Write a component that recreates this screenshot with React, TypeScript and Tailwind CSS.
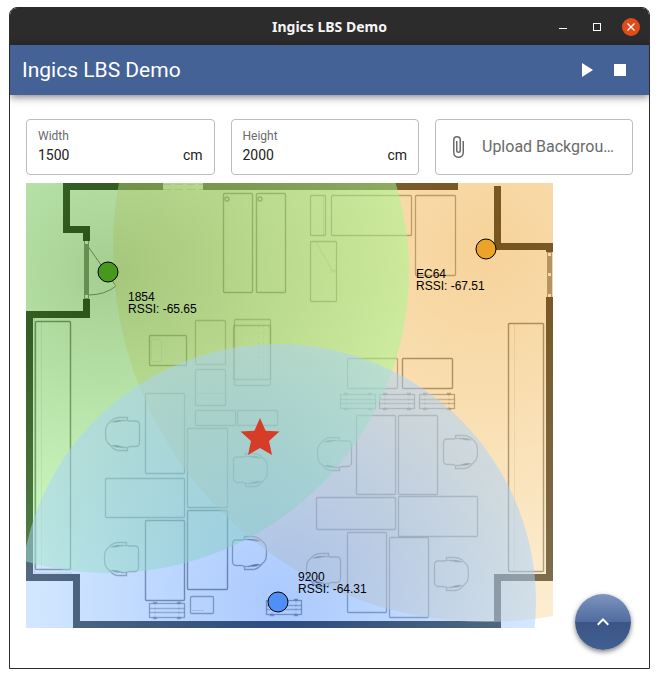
import React, { useState } from "react";

type Box = [x: number, y: number, width: number, height: number];

const walls: Box[] = [
  [63, 183, 100, 7],
  [203, 183, 255, 7],
  [63, 183, 7, 50],
  [63, 226, 27, 7],
  [83, 226, 7, 15],
  [83, 299, 7, 19],
  [26, 311, 64, 7],
  [26, 311, 7, 270],
  [26, 574, 54, 7],
  [73, 574, 7, 54],
  [73, 621, 428, 7],
  [494, 574, 7, 54],
  [494, 574, 59, 7],
  [546, 297, 7, 284],
  [494, 186, 7, 64],
  [494, 243, 59, 7],
  [546, 243, 7, 9],
];

const strongBoxes: Box[] = [
  [35, 321, 35, 248],
  [508, 323, 35, 248],
  [223, 193, 29, 99],
  [256, 193, 29, 99],
  [149, 335, 37, 30],
  [402, 358, 50, 30],
  [145, 520, 39, 80],
  [187, 510, 40, 79],
];

const furniture: Box[] = [
  [310, 195, 15, 40],
  [331, 195, 80, 40],
  [415, 195, 40, 80],
  [310, 241, 26, 60],
  [195, 320, 30, 44],
  [233, 325, 37, 54],
  [234, 319, 36, 66],
  [195, 369, 30, 36],
  [195, 410, 40, 15],
  [237, 410, 40, 15],
  [145, 393, 39, 80],
  [187, 428, 40, 79],
  [105, 478, 79, 39],
  [347, 358, 50, 30],
  [356, 415, 39, 79],
  [398, 415, 39, 79],
  [316, 497, 79, 32],
  [398, 496, 79, 40],
  [347, 532, 39, 80],
  [389, 537, 39, 80],
  [190, 596, 23, 17],
];

const radiators: [number, number][] = [
  [340, 394],
  [379, 394],
  [419, 394],
  [149, 603],
  [266, 600],
];

const chairs: { x: number; y: number; mirrored?: boolean }[] = [
  { x: 105, y: 416 },
  { x: 104, y: 541 },
  { x: 317, y: 436 },
  { x: 306, y: 552 },
  { x: 268, y: 452, mirrored: true },
  { x: 267, y: 535, mirrored: true },
  { x: 478, y: 434, mirrored: true },
  { x: 469, y: 556, mirrored: true },
];

const beacons = [
  { id: "EC64", rssi: "-67.51", x: 486, y: 249, r: 373, dot: "#eba328", inner: "#eea735", outer: "#fadda6", tx: 416, ty: 278 },
  { id: "1854", rssi: "-65.65", x: 108, y: 272, r: 301, dot: "#46991c", inner: "#4c9f24", outer: "#a2fa90", tx: 128, ty: 301 },
  { id: "9200", rssi: "-64.31", x: 278, y: 602, r: 258, dot: "#508ff8", inner: "#5693fc", outer: "#a8d2ff", tx: 298, ty: 581 },
];

function Chair({ x, y, mirrored }: { x: number; y: number; mirrored?: boolean }) {
  return (
    <g transform={`translate(${x} ${y}) scale(${mirrored ? -1 : 1} 1)`}>
      <path d="M22.500 1.500H14C9 1.500 7 4 4.500 6.500C1.500 9 .5 11 .5 17.500S1.500 26 4.500 28.500C7 31 9 34.500 14 34.500H22.500V31.500L25 30.500H31Q34.500 30.500 34.500 26V9Q34.500 5 31 5H25L22.500 4.500Z" />
      <path d="M8 5.800Q12 3.600 17 4.600Q12 6.200 8 5.800ZM8 29.700Q12 31.800 17 31Q12 29 8 29.700Z" fill="#000" fillOpacity=".5" />
      <path d="M17 4.500H22M17 31.500H22" strokeOpacity=".4" />
    </g>
  );
}

function Radiator({ x, y }: { x: number; y: number }) {
  return (
    <g transform={`translate(${x + 0.5} ${y + 0.5})`}>
      <rect width="35" height="14" />
      <path d="M0 5H35M0 9H35" strokeOpacity=".35" />
      <path d="M4 0V-1H7V0M28 0V-1H31V0M4 14V15H7V14M28 14V15H31V14" />
      <path d="M5.500 0V14M29.500 0V14" strokeOpacity=".25" strokeDasharray="2 2" />
    </g>
  );
}

function Outline({ box: [x, y, width, height] }: { box: Box }) {
  return <rect x={x + 0.5} y={y + 0.5} width={width} height={height} rx="1" />;
}

function FloorPlan() {
  return (
    <svg
      viewBox="26 183 527 445"
      role="img"
      aria-label="Floor plan with beacon ranges"
      className="block w-[527px] max-w-full"
    >
      <defs>
        {beacons.map((b) => (
          <radialGradient key={b.id} id={`range-${b.id}`}>
            <stop offset="0" stopColor={b.inner} />
            <stop offset="1" stopColor={b.outer} />
          </radialGradient>
        ))}
      </defs>

      <g fill="#000">
        {walls.map(([x, y, w, h], i) => (
          <rect key={i} x={x} y={y} width={w} height={h} />
        ))}
      </g>

      <g fill="none" stroke="#000" strokeWidth="1.400" strokeOpacity=".6">
        {strongBoxes.map((box, i) => (
          <Outline key={i} box={box} />
        ))}
        <circle cx="227" cy="199" r="2" />
        <circle cx="260" cy="199" r="2" />
        <path d="M87 245L116 286Q105 295 88 295" strokeWidth="1" />
      </g>

      <g fill="none" stroke="#000" strokeWidth="1.300" strokeOpacity=".47">
        {furniture.map((box, i) => (
          <Outline key={i} box={box} />
        ))}
        {radiators.map(([x, y]) => (
          <Radiator key={`${x}-${y}`} x={x} y={y} />
        ))}
        {chairs.map((c) => (
          <Chair key={`${c.x}-${c.y}`} {...c} />
        ))}
      </g>

      <g fill="none" stroke="#000" strokeOpacity=".2">
        <path d="M34.500 318V573H72M323.500 196V235M316 242L332 270" />
        <path d="M514.500 324V571M41.500 322V569" strokeOpacity=".1" />
        <rect x="331" y="270" width="4" height="2" />
        <rect x="151.500" y="339.500" width="10" height="22" rx="2" strokeOpacity=".12" />
        <path d="M258.500 326V380M263.500 326V380M268.500 326V380" strokeDasharray="3 2" strokeOpacity=".1" />
        <path d="M197 393.500H223M192 610.500H204" />
        <path d="M163 184.500H203M163 189.500H203" strokeDasharray="8 4" />
      </g>

      <rect x="84" y="241" width="5" height="58" fill="#777" />
      <rect x="85" y="241" width="3" height="3" fill="#fff" />
      <rect x="85" y="295" width="3" height="3" fill="#fff" />
      <rect x="547" y="252" width="5" height="45" fill="#777" />
      <rect x="548" y="253" width="3" height="3" fill="#fff" />
      <rect x="548" y="273" width="3" height="3" fill="#fff" />
      <rect x="548" y="294" width="3" height="3" fill="#fff" />

      {beacons.map((b) => (
        <circle key={b.id} cx={b.x} cy={b.y} r={b.r} fill={`url(#range-${b.id})`} fillOpacity=".5" />
      ))}

      {beacons.map((b) => (
        <g key={b.id}>
          <circle cx={b.x} cy={b.y} r="10" fill={b.dot} stroke="#000" />
          <text x={b.tx} y={b.ty} className="font-['Liberation_Sans',sans-serif] text-[12px]">
            {b.id}
          </text>
          <text x={b.tx} y={b.ty + 12} className="font-['Liberation_Sans',sans-serif] text-[12px]">
            {`RSSI: ${b.rssi}`}
          </text>
        </g>
      ))}

      <path
        d="M260 418L265.600 430.800L279.500 431.500L269 441L272 455L260 448L248 455L251 441L240.500 431.500L254.400 430.800Z"
        fill="#d63c26"
      />
    </svg>
  );
}

function SizeField({ id, label, initial }: { id: string; label: string; initial: string }) {
  const [value, setValue] = useState(initial);
  return (
    <div className="flex h-14 flex-col rounded border border-[#bdbdbd] px-[11px] pt-2">
      <label htmlFor={id} className="text-[12px] leading-4 text-[#6b6b6b]">
        {label}
      </label>
      <div className="flex items-center text-[14px] leading-[22px] text-[#212121]">
        <input
          id={id}
          value={value}
          onChange={(e) => setValue(e.target.value)}
          className="w-full min-w-0 flex-1 bg-transparent p-0 outline-none"
        />
        <span>cm</span>
      </div>
    </div>
  );
}

export default function App() {
  return (
    <div className="flex min-h-screen flex-col bg-white px-[9px] pt-[7px] pb-[9px] font-[Roboto,sans-serif]">
      <div className="relative flex flex-1 flex-col overflow-hidden rounded-t-lg border border-[#2c2c2c] bg-white">
        <div className="grid h-[37px] grid-cols-[1fr_auto_1fr] items-center bg-[#2c2c2c] text-white">
          <div className="col-start-2 font-['Noto_Sans',sans-serif] text-[14px] leading-5 font-bold text-[#f5f5f5]">
            Ingics LBS Demo
          </div>
          <div className="flex items-center justify-end gap-4 pr-[9px]">
            <button type="button" aria-label="Minimize" className="flex size-[18px] items-center justify-center">
              <span className="mt-1 h-px w-2 bg-white" />
            </button>
            <button type="button" aria-label="Maximize" className="flex size-[18px] items-center justify-center">
              <span className="size-2 border border-white" />
            </button>
            <button
              type="button"
              aria-label="Close"
              className="flex size-[18px] items-center justify-center rounded-full bg-[#e04b18]"
            >
              <svg viewBox="0 0 8 8" className="size-2" stroke="#fff" strokeWidth="1.300" aria-hidden="true">
                <path d="M.5.5L7.500 7.500M7.500.5L.5 7.500" />
              </svg>
            </button>
          </div>
        </div>

        <header className="flex h-[50px] items-center bg-[#456297] pr-[17px] pl-3 text-white shadow-[0_2px_8px_rgba(0,0,0,0.5)]">
          <h1 className="flex-1 text-[21px] leading-7">Ingics LBS Demo</h1>
          <div className="flex gap-[10px]">
            <button type="button" aria-label="Start">
              <svg viewBox="0 0 24 24" className="size-6" fill="currentColor" aria-hidden="true">
                <path d="M8 5v14l11-7z" />
              </svg>
            </button>
            <button type="button" aria-label="Stop">
              <svg viewBox="0 0 24 24" className="size-6" fill="currentColor" aria-hidden="true">
                <path d="M6 6h12v12H6z" />
              </svg>
            </button>
          </div>
        </header>

        <main className="flex flex-col gap-2 px-4 pt-6">
          <div className="grid grid-cols-[1fr_1fr_198px] gap-4">
            <SizeField id="plan-width" label="Width" initial="1500" />
            <SizeField id="plan-height" label="Height" initial="2000" />
            <label className="relative flex h-14 min-w-0 items-center gap-3 rounded border border-[#bdbdbd] pr-[14px] pl-[10px] text-[#6b6b6b]">
              <input type="file" accept="image/*" className="sr-only" />
              <svg viewBox="0 0 24 24" className="size-6 shrink-0" fill="currentColor" aria-hidden="true">
                <path d="M16.500 6v11.500a4 4 0 0 1-4 4 4 4 0 0 1-4-4V5a2.500 2.500 0 0 1 5 0v10.500a1 1 0 0 1-2 0V6H10v9.500a2.500 2.500 0 0 0 5 0V5a4 4 0 0 0-8 0v12.500a5.500 5.500 0 0 0 11 0V6z" />
              </svg>
              <span className="truncate text-[16px] leading-6">Upload Background</span>
            </label>
          </div>
          <FloorPlan />
        </main>

        <button
          type="button"
          aria-label="Scroll to top"
          className="absolute right-[18px] bottom-[18px] flex size-14 items-center justify-center rounded-full bg-[linear-gradient(#7d94bd_0%,#4f6c9f_50%,#3b5585_50%,#425f92_100%)] text-white shadow-[0_2px_5px_rgba(0,0,0,0.5)]"
        >
          <svg viewBox="0 0 24 24" className="size-6" fill="currentColor" aria-hidden="true">
            <path d="M7.410 15.410L12 10.830l4.590 4.580L18 14l-6-6-6 6z" />
          </svg>
        </button>
      </div>
    </div>
  );
}
